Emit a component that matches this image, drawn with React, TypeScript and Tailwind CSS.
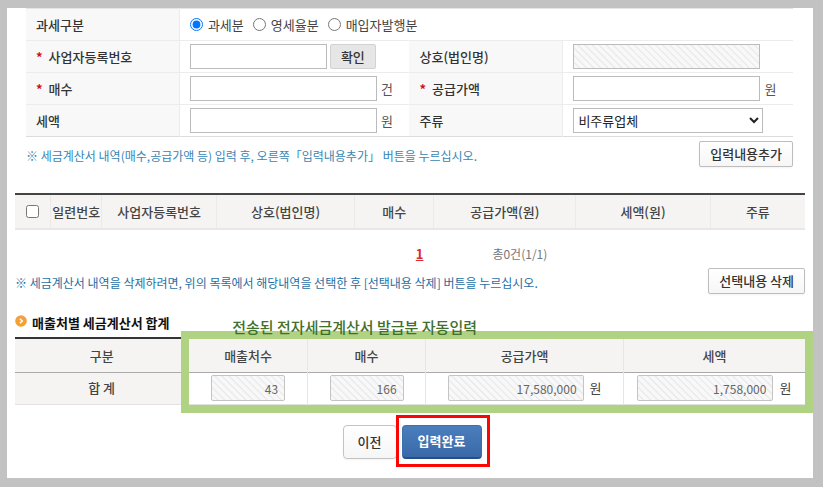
import React from 'react';

const INPUT = 'h-[25px] border border-[#bbb] bg-white px-1 text-xs text-[#444]';
const HATCH =
  'bg-[repeating-linear-gradient(45deg,#f8f8f8_0px,#f8f8f8_3px,#e6e6e6_4px,#f8f8f8_5px)]';
const SMALL_BUTTON =
  'h-[26px] shrink-0 rounded-xs border border-[#bdbdbd] bg-gradient-to-b from-white to-[#f6f6f6] px-2.5 text-[13px] font-medium text-[#333] shadow-xs';

const TAX_TYPES = ['과세분', '영세율분', '매입자발행분'];

const LIST_COLUMNS = [
  { label: '일련번호', width: 'w-[6.5%]' },
  { label: '사업자등록번호', width: 'w-[14.5%]' },
  { label: '상호(법인명)', width: 'w-[17.5%]' },
  { label: '매수', width: 'w-[10%]' },
  { label: '공급가액(원)', width: 'w-[18%]' },
  { label: '세액(원)', width: 'w-[17%]' },
  { label: '주류', width: 'w-[12%]' },
];

const TOTALS = [
  { label: '매출처수', value: '43', unit: '', col: 'w-[15%]', input: 'w-[74px]' },
  { label: '매수', value: '166', unit: '', col: 'w-[15%]', input: 'w-[74px]' },
  { label: '공급가액', value: '17,580,000', unit: '원', col: 'w-[25%]', input: 'w-[136px]' },
  { label: '세액', value: '1,758,000', unit: '원', col: 'w-[23%]', input: 'w-[136px]' },
];

interface FieldLabelProps {
  htmlFor: string;
  required?: boolean;
  children: React.ReactNode;
}

function FieldLabel({ htmlFor, required, children }: FieldLabelProps) {
  return (
    <th
      scope="row"
      className="border-r border-[#ececec] bg-[#f8f8f8] px-2.5 text-left text-[13px] font-medium text-[#333]"
    >
      <label htmlFor={htmlFor} className="flex items-center gap-1.5">
        {required && <span className="font-bold text-[#d0111b]">*</span>}
        {children}
      </label>
    </th>
  );
}

function EntryForm() {
  return (
    <table className="w-full table-fixed border-collapse border-t border-b border-t-[#e4e4e4] border-b-[#dcdcdc]">
      <colgroup>
        <col className="w-[20%]" />
        <col className="w-[30%]" />
        <col className="w-[20%]" />
        <col className="w-[30%]" />
      </colgroup>
      <tbody>
        <tr className="h-8 border-b border-[#ececec]">
          <th
            scope="row"
            className="border-r border-[#ececec] bg-[#f8f8f8] px-2.5 text-left text-[13px] font-medium text-[#333]"
          >
            과세구분
          </th>
          <td colSpan={3} className="px-2.5">
            <div className="flex items-center gap-[9px]">
              {TAX_TYPES.map((type, i) => (
                <label key={type} className="flex items-center gap-[5px] text-[13px] text-[#444]">
                  <input type="radio" name="taxType" defaultChecked={i === 0} className="size-[13px]" />
                  {type}
                </label>
              ))}
            </div>
          </td>
        </tr>
        <tr className="h-8 border-b border-[#ececec]">
          <FieldLabel htmlFor="bizNo" required>사업자등록번호</FieldLabel>
          <td className="px-2.5">
            <div className="flex items-center gap-[3px]">
              <input id="bizNo" type="text" className={`w-[137px] ${INPUT}`} />
              <button
                type="button"
                className="h-[25px] rounded-xs border border-[#d2d2d2] bg-[#e6e6e6] px-2.5 text-[13px] leading-5 font-medium whitespace-nowrap text-[#333]"
              >
                확인
              </button>
            </div>
          </td>
          <FieldLabel htmlFor="company">상호(법인명)</FieldLabel>
          <td className="px-2.5">
            <input
              id="company"
              type="text"
              readOnly
              className={`block h-[25px] w-[187px] border border-[#bbb] ${HATCH}`}
            />
          </td>
        </tr>
        <tr className="h-8 border-b border-[#ececec]">
          <FieldLabel htmlFor="count" required>매수</FieldLabel>
          <td className="px-2.5">
            <div className="flex items-center gap-1 text-[13px] text-[#555]">
              <input id="count" type="text" className={`w-[187px] ${INPUT}`} />
              건
            </div>
          </td>
          <FieldLabel htmlFor="supply" required>공급가액</FieldLabel>
          <td className="px-2.5">
            <div className="flex items-center gap-1 text-[13px] text-[#555]">
              <input id="supply" type="text" className={`w-[187px] ${INPUT}`} />
              원
            </div>
          </td>
        </tr>
        <tr className="h-8">
          <FieldLabel htmlFor="tax">세액</FieldLabel>
          <td className="px-2.5">
            <div className="flex items-center gap-1 text-[13px] text-[#555]">
              <input id="tax" type="text" className={`w-[187px] ${INPUT}`} />
              원
            </div>
          </td>
          <FieldLabel htmlFor="liquor">주류</FieldLabel>
          <td className="px-2.5">
            <select
              id="liquor"
              className="block h-[25px] w-[190px] border border-[#bbb] bg-white text-[13px] text-[#222]"
            >
              <option>비주류업체</option>
              <option>주류업체</option>
            </select>
          </td>
        </tr>
      </tbody>
    </table>
  );
}

function InvoiceList() {
  return (
    <table className="mt-[26px] w-full table-fixed border-collapse">
      <thead>
        <tr className="h-[35px] border-t-2 border-b-2 border-t-[#444] border-b-[#e8e8e8] bg-[#f5f4f2] text-[13px] text-[#444]">
          <th className="w-[4.5%]">
            <input type="checkbox" aria-label="전체선택" className="mx-auto block size-[13px]" />
          </th>
          {LIST_COLUMNS.map((c) => (
            <th
              key={c.label}
              scope="col"
              className={`border-l border-[#ebeae8] font-medium whitespace-nowrap ${c.width}`}
            >
              {c.label}
            </th>
          ))}
        </tr>
      </thead>
    </table>
  );
}

function ArrowBullet() {
  return (
    <svg viewBox="0 0 12 12" className="mb-1 size-3" aria-hidden="true">
      <defs>
        <linearGradient id="bullet" x1="0" y1="0" x2="0" y2="1">
          <stop offset="0" stopColor="#f0a050" />
          <stop offset="1" stopColor="#f9a01e" />
        </linearGradient>
      </defs>
      <circle cx="6" cy="6" r="5.8" fill="url(#bullet)" />
      <path d="M4.9 3.7 7.3 6 4.9 8.3" fill="none" stroke="#fff" strokeWidth="1.5" />
    </svg>
  );
}

function Totals() {
  return (
    <section>
      <h2 className="mt-[17px] mb-0.5 flex h-6 items-center gap-[5px] text-[13px] font-bold text-[#111]">
        <ArrowBullet />
        매출처별 세금계산서 합계
      </h2>
      <div className="relative">
        <table className="w-full table-fixed border-collapse text-[13px] text-[#444]">
          <thead>
            <tr className="h-[34px] border-t-2 border-b border-t-[#333] border-b-[#aaa] bg-[#f5f4f2]">
              <th scope="col" className="w-[22%] font-medium">구분</th>
              {TOTALS.map((t) => (
                <th
                  key={t.label}
                  scope="col"
                  className={`border-l border-[#e6e6e6] font-medium ${t.col}`}
                >
                  {t.label}
                </th>
              ))}
            </tr>
          </thead>
          <tbody>
            <tr className="h-8 border-b border-[#e2e2e2]">
              <th scope="row" className="bg-[#f5f4f2] font-medium">합 계</th>
              {TOTALS.map((t) => (
                <td key={t.label} className="border-l border-[#e6e6e6]">
                  <div className="flex items-center justify-center gap-1.5">
                    <input
                      type="text"
                      readOnly
                      aria-label={t.label}
                      value={t.value}
                      className={`h-[26px] rounded-xs border border-[#c4c4c4] px-1.5 text-right text-xs text-[#666] ${HATCH} ${t.input}`}
                    />
                    {t.unit}
                  </div>
                </td>
              ))}
            </tr>
          </tbody>
        </table>

        {/* Highlight over the auto-filled totals */}
        <div className="pointer-events-none absolute -top-1.5 -right-2 -bottom-2 left-[21%] border-8 border-[#afd383]" />
        <p className="absolute -top-5 left-[27.5%] text-[15px] leading-5 font-medium whitespace-nowrap text-[#41702a]">
          전송된 전자세금계산서 발급분 자동입력
        </p>
      </div>
    </section>
  );
}

export default function App() {
  return (
    <div className="flex min-h-screen flex-col bg-[#c2c2c2] pt-2 pr-2.5 pb-[9px] pl-[7px] font-['Noto_Sans_CJK_KR',sans-serif]">
      <main className="flex-1 bg-white px-2 pb-4">
        <div className="pr-3 pl-[11px]">
          <EntryForm />
          <div className="mt-1 flex items-center justify-between">
            <p className="pt-1 text-xs text-[#3a86b4]">
              ※ 세금계산서 내역(매수,공급가액 등) 입력 후, 오른쪽「입력내용추가」 버튼을 누르십시오.
            </p>
            <button type="button" className={SMALL_BUTTON}>입력내용추가</button>
          </div>
        </div>

        <InvoiceList />

        <nav className="mt-3 mb-0.5 grid h-6 grid-cols-[51.7%_1fr] items-center gap-[69px] text-xs">
          <a href="#1" className="justify-self-end text-[13px] font-bold text-[#dc2a36] underline">1</a>
          <span className="text-[#777]">총0건(1/1)</span>
        </nav>

        <div className="flex items-center justify-between">
          <p className="pt-1 text-xs text-[#1d6fa5]">
            ※ 세금계산서 내역을 삭제하려면, 위의 목록에서 해당내역을 선택한 후 [선택내용 삭제] 버튼을 누르십시오.
          </p>
          <button type="button" className={SMALL_BUTTON}>선택내용 삭제</button>
        </div>

        <Totals />

        <div className="mt-5 flex justify-center gap-[5px] pl-1">
          <button
            type="button"
            className="h-[34px] w-[54px] rounded-sm border border-[#c4c4c4] bg-gradient-to-b from-white to-[#f6f6f6] text-[13px] font-medium text-[#333] shadow-xs"
          >
            이전
          </button>
          <div className="relative">
            <button
              type="button"
              className="h-[34px] w-20 rounded-sm border border-b-2 border-[#3d6fae] border-b-[#264f87] bg-gradient-to-b from-[#4a7ebd] to-[#3a69a8] text-[13px] font-bold text-white"
            >
              입력완료
            </button>
            <div className="pointer-events-none absolute -top-2.5 -right-2 -bottom-2 -left-1.5 border-3 border-[#fb0505]" />
          </div>
        </div>
      </main>
    </div>
  );
}
